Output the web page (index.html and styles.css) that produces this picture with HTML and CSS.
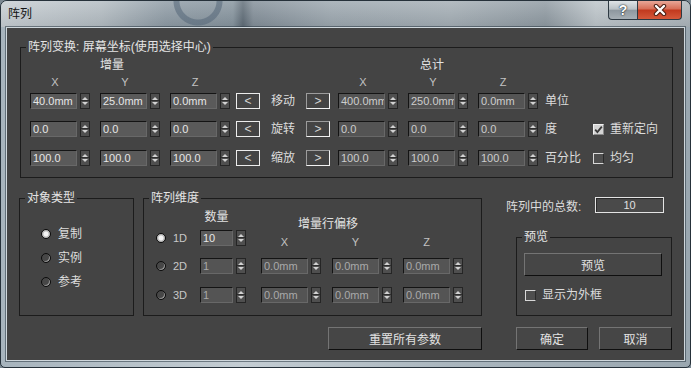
FILE: index.html
```html
<!DOCTYPE html>
<html lang="zh-CN">
<head>
<meta charset="utf-8">
<title>阵列</title>
<link rel="stylesheet" href="styles.css">
</head>
<body>
<div class="window">
  <div class="titlebar">
    <span class="title">阵列</span>
    <div class="caption">
      <span class="cbtn help">?</span>
      <span class="cbtn close"><svg width="16" height="12" viewBox="0 0 16 12"><path d="M4 2 L12 10 M12 2 L4 10" stroke="#4a1e12" stroke-width="4.4" stroke-linecap="round"/><path d="M4 2 L12 10 M12 2 L4 10" stroke="#fff" stroke-width="2.4" stroke-linecap="round"/></svg></span>
    </div>
  </div>
  <div class="client">
    <fieldset class="group g1">
      <legend>阵列变换: 屏幕坐标(使用选择中心)</legend>
      <div class="g1-body">
        <div class="heads"><span class="h-inc">增量</span><span class="h-tot">总计</span></div>
        <div class="axes"><span>X</span><span>Y</span><span>Z</span><span class="axr">X</span><span>Y</span><span>Z</span></div>
        <div class="trow first">
          <div class="fgroup">
            <span class="field"><span class="inp">40.0mm</span><span class="spin"></span></span>
            <span class="field"><span class="inp">25.0mm</span><span class="spin"></span></span>
            <span class="field"><span class="inp">0.0mm</span><span class="spin"></span></span>
          </div>
          <span class="arr l">&lt;</span><span class="op">移动</span><span class="arr r">&gt;</span>
          <div class="fgroup right">
            <span class="field"><span class="inp dim">400.0mm</span><span class="spin"></span></span>
            <span class="field"><span class="inp dim">250.0mm</span><span class="spin"></span></span>
            <span class="field"><span class="inp dim">0.0mm</span><span class="spin"></span></span>
          </div>
          <span class="unit">单位</span>
        </div>
        <div class="trow">
          <div class="fgroup">
            <span class="field"><span class="inp">0.0</span><span class="spin"></span></span>
            <span class="field"><span class="inp">0.0</span><span class="spin"></span></span>
            <span class="field"><span class="inp">0.0</span><span class="spin"></span></span>
          </div>
          <span class="arr l">&lt;</span><span class="op">旋转</span><span class="arr r">&gt;</span>
          <div class="fgroup right">
            <span class="field"><span class="inp dim">0.0</span><span class="spin"></span></span>
            <span class="field"><span class="inp dim">0.0</span><span class="spin"></span></span>
            <span class="field"><span class="inp dim">0.0</span><span class="spin"></span></span>
          </div>
          <span class="unit">度</span>
          <span class="chk"><span class="box on"><svg width="9" height="9" viewBox="0 0 9 9"><path d="M1.2 4.6 L3.4 7 L7.8 1.6" fill="none" stroke="#3a3a3a" stroke-width="1.8"/></svg></span>重新定向</span>
        </div>
        <div class="trow last">
          <div class="fgroup">
            <span class="field"><span class="inp">100.0</span><span class="spin"></span></span>
            <span class="field"><span class="inp">100.0</span><span class="spin"></span></span>
            <span class="field"><span class="inp">100.0</span><span class="spin"></span></span>
          </div>
          <span class="arr l">&lt;</span><span class="op">缩放</span><span class="arr r">&gt;</span>
          <div class="fgroup right">
            <span class="field"><span class="inp dim">100.0</span><span class="spin"></span></span>
            <span class="field"><span class="inp dim">100.0</span><span class="spin"></span></span>
            <span class="field"><span class="inp dim">100.0</span><span class="spin"></span></span>
          </div>
          <span class="unit">百分比</span>
          <span class="chk"><span class="box"></span>均匀</span>
        </div>
      </div>
    </fieldset>

    <div class="mid">
      <fieldset class="group g2">
        <legend>对象类型</legend>
        <div class="g2-body">
          <div class="rad-row"><span class="radio on"></span>复制</div>
          <div class="rad-row"><span class="radio"></span>实例</div>
          <div class="rad-row"><span class="radio"></span>参考</div>
        </div>
      </fieldset>

      <fieldset class="group g3">
        <legend>阵列维度</legend>
        <div class="g3-body">
          <div class="g3-top">
            <div class="g3-left">
              <div class="qty-head">数量</div>
              <div class="drow d1">
                <span class="dcell"><span class="radio on"></span>1D</span>
                <span class="field cnt"><span class="inp">10</span><span class="spin"></span></span>
              </div>
            </div>
            <div class="g3-right">
              <div class="off-head">增量行偏移</div>
              <div class="off-axes"><span>X</span><span>Y</span><span>Z</span></div>
            </div>
          </div>
          <div class="drow">
            <span class="dcell"><span class="radio"></span>2D</span>
            <span class="field cnt"><span class="inp off">1</span><span class="spin"></span></span>
            <div class="dfields">
              <span class="field"><span class="inp off">0.0mm</span><span class="spin"></span></span>
              <span class="field"><span class="inp off">0.0mm</span><span class="spin"></span></span>
              <span class="field"><span class="inp off">0.0mm</span><span class="spin"></span></span>
            </div>
          </div>
          <div class="drow d3">
            <span class="dcell"><span class="radio"></span>3D</span>
            <span class="field cnt"><span class="inp off">1</span><span class="spin"></span></span>
            <div class="dfields">
              <span class="field"><span class="inp off">0.0mm</span><span class="spin"></span></span>
              <span class="field"><span class="inp off">0.0mm</span><span class="spin"></span></span>
              <span class="field"><span class="inp off">0.0mm</span><span class="spin"></span></span>
            </div>
          </div>
        </div>
      </fieldset>

      <div class="rcol">
        <div class="total"><span class="total-label">阵列中的总数:</span><span class="total-box">10</span></div>
        <fieldset class="group g4">
          <legend>预览</legend>
          <div class="g4-body">
            <div class="btn preview">预览</div>
            <div class="chk chk-row"><span class="box"></span>显示为外框</div>
          </div>
        </fieldset>
      </div>
    </div>

    <div class="bottom">
      <div class="btn reset">重置所有参数</div>
      <div class="btn ok">确定</div>
      <div class="btn cancel">取消</div>
    </div>
  </div>
</div>
</body>
</html>
```

FILE: styles.css
```css
* { box-sizing: border-box; }
html, body { margin: 0; padding: 0; }
body {
  width: 691px;
  height: 368px;
  overflow: hidden;
  background: #7a8791;
  font-family: "Liberation Sans", "Noto Sans CJK SC", sans-serif;
  font-size: 12px;
  color: #dadada;
}

.window {
  width: 691px;
  height: 368px;
  border: 1px solid #26313a;
  border-radius: 7px 7px 5px 5px;
  background: linear-gradient(to right, #a7b4bd 0%, #c4cdd3 35%, #aab6be 65%, #9aa7b0 100%);
  display: flex;
  flex-direction: column;
  overflow: hidden;
}

.titlebar {
  height: 26px;
  flex: none;
  display: flex;
  align-items: flex-start;
  background:
    radial-gradient(circle at 197px 0px, rgba(0,0,0,0) 0 18px, rgba(84,102,120,.55) 19px 24px, rgba(0,0,0,0) 25px),
    linear-gradient(to bottom, rgba(255,255,255,.18), rgba(0,0,0,.06)),
    linear-gradient(to right, #c6cdd2 0px, #b2bbc1 100px, #8d9aa4 165px, #85939d 232px, #5e6b76 242px, #818d97 252px, #9ba6ae 330px, #a3adb4 450px, #8e99a1 545px, #bcc4c9 595px, #aab3b9 691px);
}
.title {
  margin: 6px 0 0 7px;
  line-height: 14px;
  color: #141414;
  font-size: 12px;
}
.caption {
  margin-left: auto;
  margin-right: 8px;
  display: flex;
}
.cbtn {
  height: 19px;
  display: flex;
  align-items: center;
  justify-content: center;
  border: 1px solid #2d3942;
  border-top: none;
}
.help {
  width: 29px;
  border-right: none;
  border-radius: 0 0 0 4px;
  background: linear-gradient(#dfe4e7 0%, #b9c1c6 45%, #8e989f 52%, #a6afb5 100%);
  color: #fff;
  font: bold 14px/17px "Liberation Sans", sans-serif;
  text-shadow: 0 0 2px #1c252c, 0 0 1px #1c252c;
}
.close {
  width: 45px;
  border-radius: 0 0 4px 0;
  background: linear-gradient(#e9a797 0%, #d8715a 42%, #c23a1f 52%, #d5583a 100%);
}

.client {
  flex: none;
  height: 334px;
  margin: 0 5px;
  border: 1px solid #cfd7dc;
  box-shadow: 0 0 0 1px rgba(40, 55, 66, .55);
  background: #444444;
  padding-top: 12px;
}

.group {
  margin: 0;
  padding: 0;
  min-width: 0;
  border: 1px solid #1c1c1c;
}
legend {
  margin-left: 5px;
  padding: 0 2px;
  line-height: 14px;
  font-size: 12px;
  color: #e4e4e4;
}

.g1 { margin-left: 13px; width: 653px; }
.g1-body { padding: 4px 0 11px 9px; }
.heads { display: flex; height: 14px; line-height: 14px; color: #e2e2e2; }
.h-inc { margin-left: 70px; }
.h-tot { margin-left: 296px; }
.axes {
  display: flex;
  margin-top: 3px;
  height: 14px;
  line-height: 14px;
  font-size: 11px;
  color: #c2c2c2;
}
.axes span { width: 50px; margin-right: 20px; text-align: center; }
.axes .axr { margin-left: 98px; }

.trow { display: flex; align-items: center; height: 16px; margin-top: 12px; }
.trow.first { margin-top: 4px; }
.trow.last { margin-top: 13px; }

.fgroup { display: flex; gap: 10px; }
.fgroup.right { margin-left: 8px; }

.field { display: flex; gap: 3px; width: 60px; flex: none; }
.inp {
  width: 47px;
  height: 16px;
  flex: none;
  background: #5a5a5a;
  border: 1px solid;
  border-color: #141414 #686868 #686868 #141414;
  color: #e6e6e6;
  font-size: 11px;
  line-height: 14px;
  padding-left: 2px;
  white-space: nowrap;
  overflow: hidden;
}
.inp.dim { background: #545454; color: #cdcdcd; }
.inp.off { background: #545454; color: #a9a9a9; }
.spin {
  width: 10px;
  height: 16px;
  flex: none;
  display: flex;
  flex-direction: column;
  align-items: center;
  justify-content: space-evenly;
  border: 1px solid #252525;
  background: linear-gradient(#4f4f4f 0 6px, #2e2e2e 6px 7px, #4f4f4f 7px);
}
.spin::before {
  content: "";
  border: solid transparent;
  border-width: 0 3px 3px;
  border-bottom-color: #d2d2d2;
}
.spin::after {
  content: "";
  border: solid transparent;
  border-width: 3px 3px 0;
  border-top-color: #d2d2d2;
}

.arr {
  width: 24px;
  height: 16px;
  flex: none;
  display: flex;
  align-items: center;
  justify-content: center;
  border: 1px solid #ececec;
  color: #d6d6d6;
  font-size: 12px;
  line-height: 14px;
}
.arr.l { margin-left: 6px; }
.arr.r { border-color: #9c9c9c #f2f2f2 #f2f2f2 #9c9c9c; }
.op { width: 46px; text-align: center; color: #dcdcdc; line-height: 16px; }
.unit { width: 48px; margin-left: 7px; color: #dcdcdc; line-height: 16px; }

.chk { display: flex; align-items: center; gap: 6px; color: #dcdcdc; line-height: 14px; }
.box {
  width: 11px;
  height: 11px;
  flex: none;
  display: flex;
  align-items: center;
  justify-content: center;
  background: #4e4e4e;
  border: 1px solid;
  border-color: #d8d8d8 #2a2a2a #d8d8d8 #d8d8d8;
}
.box.on { background: #d4d4d4; border-color: #f0f0f0 #8a8a8a #8a8a8a #f0f0f0; }

.mid { display: flex; align-items: flex-start; margin-top: 13px; }

.g2 { margin-left: 12px; width: 115px; }
.g2-body { padding: 22px 0 26px 21px; display: flex; flex-direction: column; gap: 10px; }
.rad-row { display: flex; align-items: center; gap: 7px; height: 14px; line-height: 14px; color: #dcdcdc; }

.radio {
  width: 10px;
  height: 10px;
  flex: none;
  border-radius: 50%;
  border: 1px solid #0c0c0c;
  background: #474747;
  box-shadow: inset -1px -1px 0 #9a9a9a;
}
.radio.on {
  background: radial-gradient(circle, #f6f6f6 0 2px, #bdbdbd 3px);
  box-shadow: none;
}

.g3 { margin-left: 9px; width: 339px; }
.g3-body { padding-bottom: 12px; }
.g3-top { display: flex; height: 53px; }
.g3-left { width: 102px; padding-top: 5px; }
.qty-head { margin-left: 56px; width: 33px; text-align: center; line-height: 14px; color: #e2e2e2; }
.g3-left .drow { margin-top: 6px; }
.g3-right { margin-left: 15px; padding-top: 12px; }
.off-head { margin-left: 37px; line-height: 14px; color: #e2e2e2; }
.off-axes { display: flex; margin-top: 4px; line-height: 14px; font-size: 11px; color: #c2c2c2; }
.off-axes span { width: 47px; margin-right: 24px; text-align: center; }

.drow { display: flex; align-items: center; height: 16px; }
.drow.d3 { margin-top: 13px; }
.dcell {
  margin-left: 12px;
  width: 44px;
  flex: none;
  display: flex;
  align-items: center;
  gap: 7px;
  font-size: 11px;
  color: #c8c8c8;
}
.field.cnt { width: 46px; }
.field.cnt .inp { width: 33px; }
.dfields { margin-left: 15px; display: flex; gap: 11px; }

.rcol { width: 202px; display: flex; flex-direction: column; }
.total { display: flex; align-items: center; height: 16px; margin-top: 6px; padding-left: 24px; }
.total-label { width: 89px; color: #dcdcdc; }
.total-box {
  width: 69px;
  height: 16px;
  border: 1px solid #e4e4e4;
  box-shadow: inset 1px 1px 0 #2a2a2a;
  background: #4a4a4a;
  text-align: center;
  font-size: 11px;
  line-height: 14px;
  color: #e0e0e0;
}
.g4 { margin-top: 17px; margin-left: 34px; width: 156px; }
.g4-body { padding: 9px 0 13px 7px; }
.chk-row { margin-top: 12px; padding-left: 1px; height: 14px; }

.btn {
  height: 23px;
  display: flex;
  align-items: center;
  justify-content: center;
  background: #464646;
  border: 1px solid;
  border-color: #747474 #0f0f0f #0f0f0f #747474;
  color: #e2e2e2;
  font-size: 12px;
}
.btn.preview { width: 138px; }

.bottom { display: flex; margin-top: 11px; }
.reset { margin-left: 321px; width: 154px; }
.ok { margin-left: 34px; width: 72px; }
.cancel { margin-left: 11px; width: 73px; }
```
